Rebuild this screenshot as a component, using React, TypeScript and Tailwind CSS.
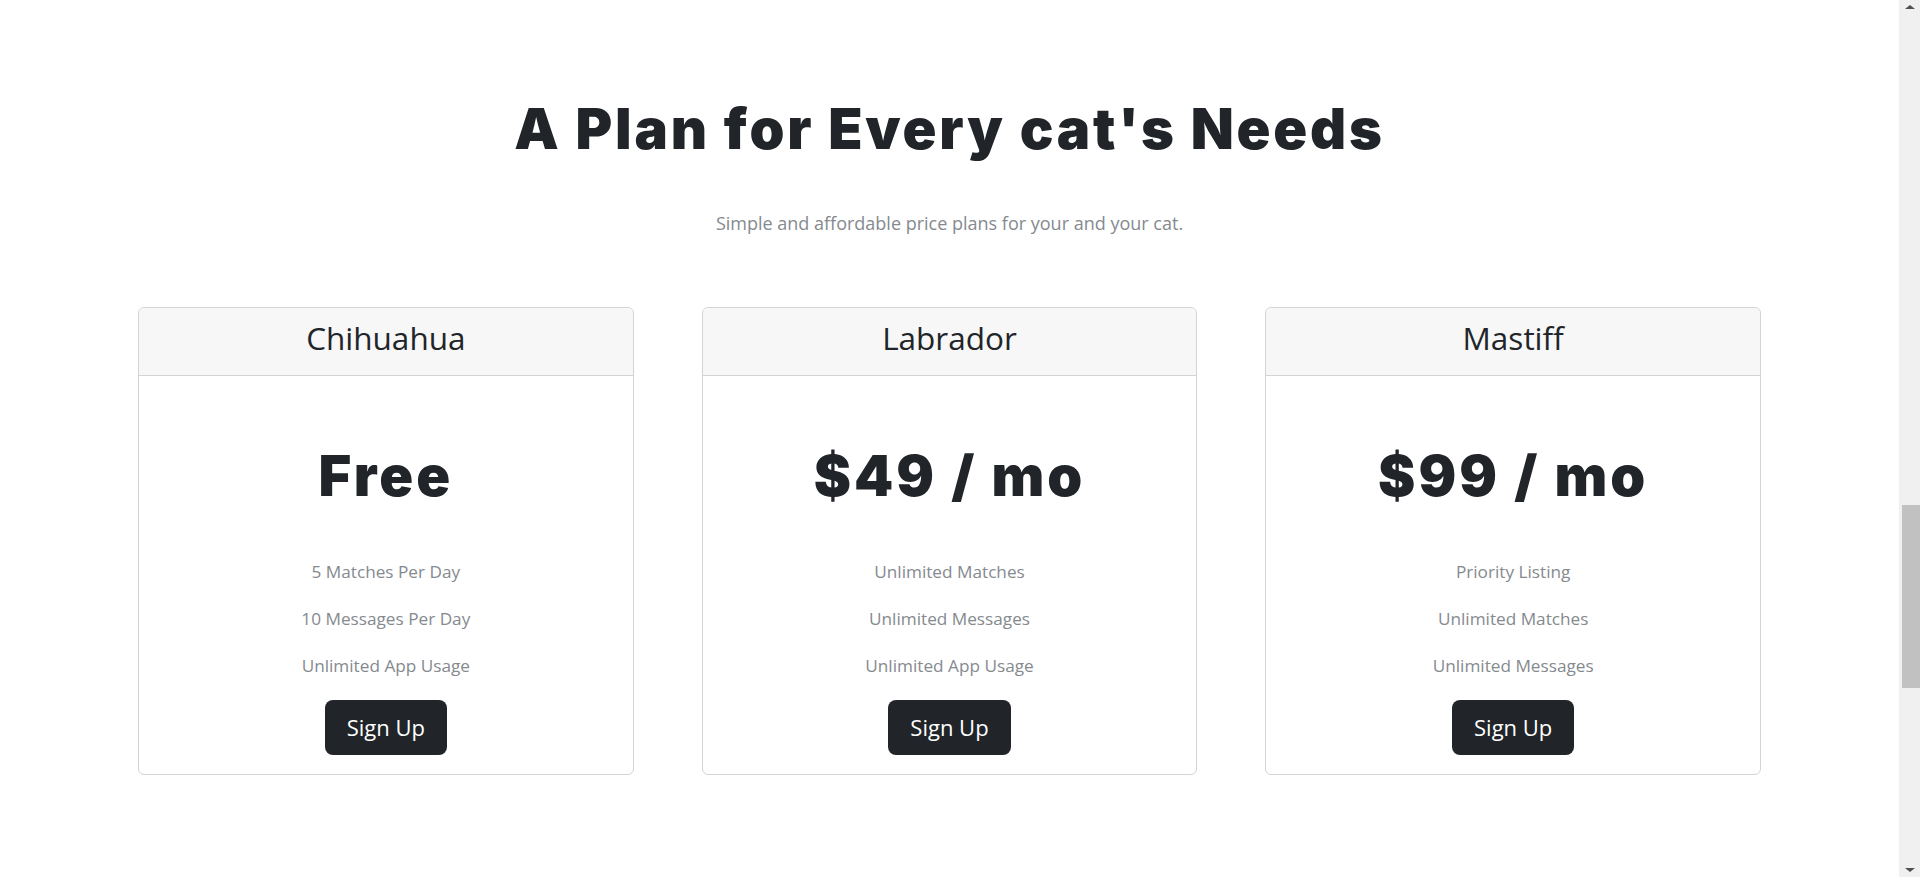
const plans = [
  {
    name: "Chihuahua",
    price: "Free",
    features: ["5 Matches Per Day", "10 Messages Per Day", "Unlimited App Usage"],
  },
  {
    name: "Labrador",
    price: "$49 / mo",
    features: ["Unlimited Matches", "Unlimited Messages", "Unlimited App Usage"],
  },
  {
    name: "Mastiff",
    price: "$99 / mo",
    features: ["Priority Listing", "Unlimited Matches", "Unlimited Messages"],
  },
];

function PlanCard({ name, price, features }: { name: string; price: string; features: string[] }) {
  return (
    <div className="flex flex-col rounded-md border border-[#d3d4d5] bg-white text-center">
      <div className="h-[68px] rounded-t-md border-b border-[#d3d4d5] bg-[#f7f7f7] pt-[11px]">
        <h3 className="font-['Open_Sans',sans-serif] text-[31.5px] leading-[38px] text-[#212529]">{name}</h3>
      </div>
      <div className="flex flex-col items-center px-4 pb-[19px] pt-[68px]">
        <h2 className="font-['Inter',sans-serif] text-[56px] font-black leading-[64px] tracking-[3px] text-[#212529]">
          {price}
        </h2>
        <div className="mt-[52px] flex flex-col gap-[23px] font-['Open_Sans',sans-serif] text-[17.2px] leading-[24px] text-[#858a8f]">
          {features.map((f) => (
            <p key={f}>{f}</p>
          ))}
        </div>
        <button className="mt-[22px] h-[55px] rounded-lg bg-[#212529] px-[22px] font-['Open_Sans',sans-serif] text-[22px] text-white">
          Sign Up
        </button>
      </div>
    </div>
  );
}

function Scrollbar() {
  return (
    <div className="flex h-full w-[21px] flex-col items-center bg-[#f0f0f0]">
      <div className="flex h-[17px] items-start justify-center pt-[5px]">
        <div className="h-0 w-0 border-x-[5px] border-b-[4px] border-x-transparent border-b-[#505050]" />
      </div>
      <div className="ml-[2px] mt-[488px] h-[183px] w-[18px] bg-[#c1c1c1]" />
      <div className="flex-1" />
      <div className="flex h-[17px] items-end justify-center pb-[5px]">
        <div className="h-0 w-0 border-x-[5px] border-t-[4px] border-x-transparent border-t-[#505050]" />
      </div>
    </div>
  );
}

export default function App() {
  return (
    <div className="flex h-[877px] overflow-hidden bg-white">
      <section className="flex-1 px-[138px] pt-[87px] text-center">
        <h2 className="font-['Inter',sans-serif] text-[56px] font-black leading-[84px] tracking-[2.8px] text-[#212529]">
          A Plan for Every cat's Needs
        </h2>
        <p className="mt-[37px] font-['Open_Sans',sans-serif] text-[18px] leading-[30px] text-[#858a8f]">
          Simple and affordable price plans for your and your cat.
        </p>
        <div className="mt-[69px] grid grid-cols-3 gap-[68px]">
          {plans.map((p) => (
            <PlanCard key={p.name} {...p} />
          ))}
        </div>
      </section>
      <Scrollbar />
    </div>
  );
}
